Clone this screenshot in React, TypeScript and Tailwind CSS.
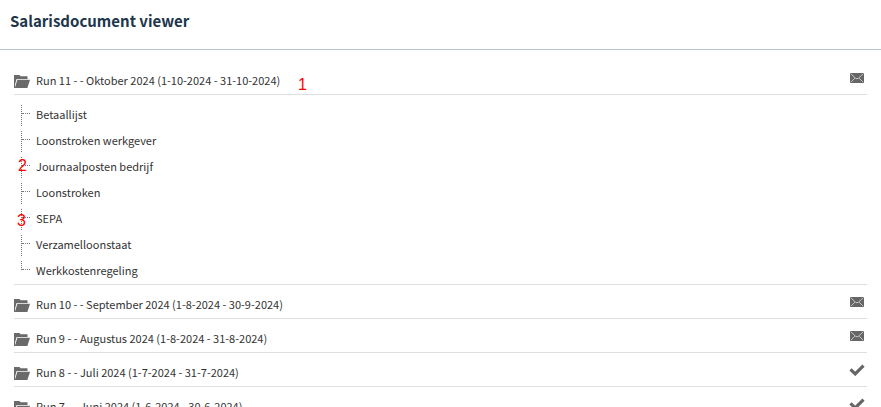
import React, { useState } from "react";

interface Run {
  id: number;
  title: string;
  status: "mail" | "done";
  documents: string[];
}

const runs: Run[] = [
  {
    id: 11,
    title: "Run 11 - - Oktober 2024 (1-10-2024 - 31-10-2024)",
    status: "mail",
    documents: [
      "Betaallijst",
      "Loonstroken werkgever",
      "Journaalposten bedrijf",
      "Loonstroken",
      "SEPA",
      "Verzamelloonstaat",
      "Werkkostenregeling",
    ],
  },
  { id: 10, title: "Run 10 - - September 2024 (1-8-2024 - 30-9-2024)", status: "mail", documents: [] },
  { id: 9, title: "Run 9 - - Augustus 2024 (1-8-2024 - 31-8-2024)", status: "mail", documents: [] },
  { id: 8, title: "Run 8 - - Juli 2024 (1-7-2024 - 31-7-2024)", status: "done", documents: [] },
  { id: 7, title: "Run 7 - - Juni 2024 (1-6-2024 - 30-6-2024)", status: "done", documents: [] },
];

// Numbered markers that lie over the list
const markers = [
  { label: "1", place: "left-[298px] top-[76px]" },
  { label: "2", place: "left-[18px] top-[157px]" },
  { label: "3", place: "left-[17px] top-[212px]" },
];

function FolderIcon() {
  return (
    <svg width="16" height="13" viewBox="0 0 16 13" className="mt-[3px] shrink-0" fill="#6a6a6a" aria-hidden="true">
      <path d="M0 0h5.5l1 1.2h7V4H2.6L1 9.5V13H0z" />
      <path d="M3.4 4.8H16L13.4 13H0.8z" />
    </svg>
  );
}

function MailIcon() {
  return (
    <svg width="14" height="10" viewBox="0 0 14 10" aria-hidden="true">
      <path d="M0 0h14v10H0z" fill="#666" />
      <path d="M0.5 0.5L5.5 5.2Q7 6.4 8.5 5.2L13.5 0.5M0.8 9.3L4.8 5.2M13.2 9.3L9.2 5.2" fill="none" stroke="#d0d0d0" strokeWidth="0.9" />
    </svg>
  );
}

function CheckIcon() {
  return (
    <svg width="16" height="12" viewBox="0 0 16 12" aria-hidden="true">
      <path d="M1.5 5.4L6.2 9.9L14.5 1.6" fill="none" stroke="#666" strokeWidth="3.2" />
    </svg>
  );
}

function DocumentTree({ documents }: { documents: string[] }) {
  return (
    <ul className="border-b border-[#dfdfdf] pt-[7px] pl-[7px]">
      {documents.map((name, idx) => {
        const isLast = idx === documents.length - 1;
        return (
          <li key={name} className="flex h-[26px] items-start">
            {/* Dotted branch */}
            <span className={`mt-[3px] w-[9px] shrink-0 border-l border-dotted border-[#777] ${isLast ? "h-[9px]" : "h-[21px]"}`}>
              <span className="block h-[9px] border-b border-dotted border-[#777]" />
            </span>
            <a href="#" className="ml-[6px] leading-[24px]">
              {name}
            </a>
          </li>
        );
      })}
    </ul>
  );
}

export default function App() {
  const [openId, setOpenId] = useState<number | null>(11);

  return (
    <div className="relative h-screen overflow-hidden bg-white font-['Noto_Sans_CJK_SC',sans-serif] text-[11px] text-[#333]">
      <header className="border-b border-[#b9c4cc] px-[10px] pt-[9px] pb-[16px]">
        <h1 className="text-[15px] leading-[24px] font-bold text-[#20364b]">Salarisdocument viewer</h1>
      </header>

      <main className="pt-[11px] pr-[14px] pl-[14px]">
        {runs.map((run) => (
          <section key={run.id}>
            <div className="flex h-[34px] items-center justify-between border-b border-[#dfdfdf]">
              <button
                type="button"
                aria-expanded={openId === run.id}
                onClick={() => setOpenId(openId === run.id ? null : run.id)}
                className="flex cursor-pointer items-center gap-[6px] pt-[5px] text-left leading-[20px]"
              >
                <FolderIcon />
                {run.title}
              </button>
              <span className="flex w-[20px] justify-center">
                {run.status === "mail" ? <MailIcon /> : <CheckIcon />}
              </span>
            </div>
            {openId === run.id && run.documents.length > 0 && <DocumentTree documents={run.documents} />}
          </section>
        ))}
      </main>

      {markers.map((marker) => (
        <span
          key={marker.label}
          className={`absolute font-['Liberation_Sans',sans-serif] text-[16px] leading-[18px] text-[#ff0000] ${marker.place}`}
        >
          {marker.label}
        </span>
      ))}
    </div>
  );
}
